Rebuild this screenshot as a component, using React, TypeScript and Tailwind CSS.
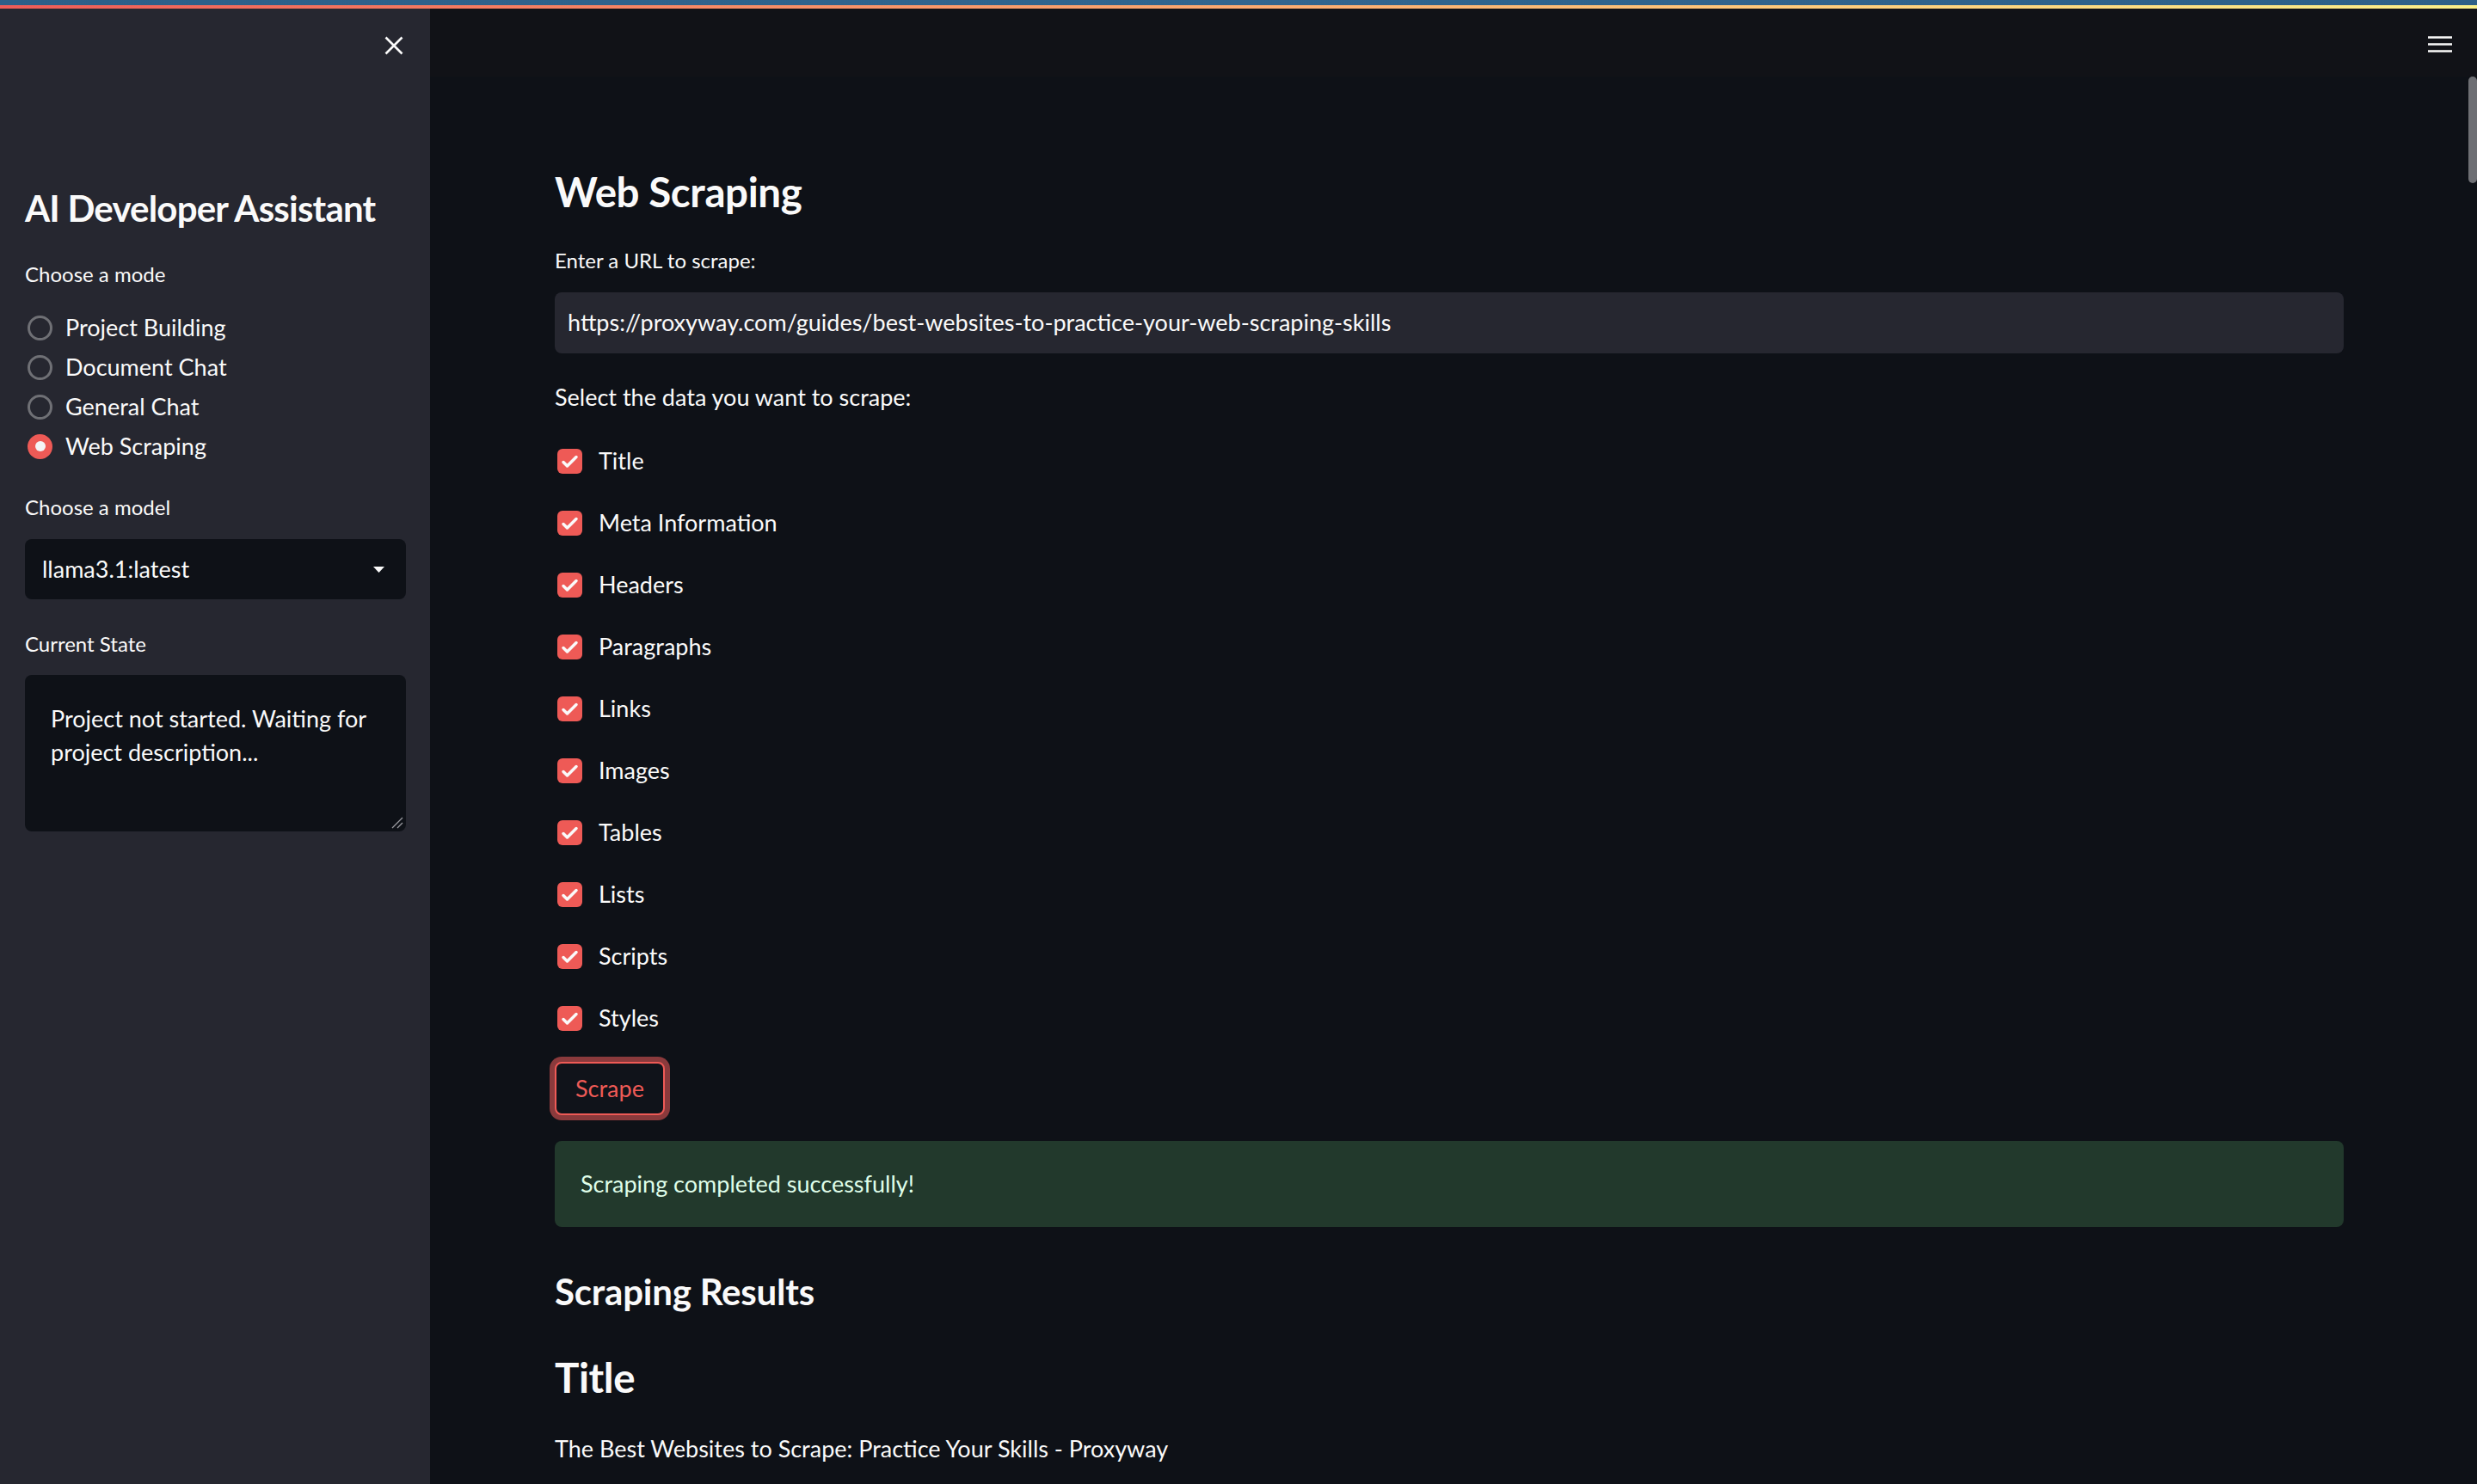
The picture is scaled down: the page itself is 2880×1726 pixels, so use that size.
import React from "react";

const modes = ["Project Building", "Document Chat", "General Chat", "Web Scraping"];

const fields = [
  "Title",
  "Meta Information",
  "Headers",
  "Paragraphs",
  "Links",
  "Images",
  "Tables",
  "Lists",
  "Scripts",
  "Styles",
];

function Radio({ label, checked }: { label: string; checked?: boolean }) {
  return (
    <div className="flex h-[46px] items-center gap-[15px] pl-[3px]">
      {checked ? (
        <span className="flex h-[29px] w-[29px] items-center justify-center rounded-full bg-[#ee5a56]">
          <span className="h-[12px] w-[12px] rounded-full bg-[#f4f4f6]" />
        </span>
      ) : (
        <span className="h-[29px] w-[29px] rounded-full border-[3px] border-[#6f7075]" />
      )}
      <span className="text-[27px] leading-[36px] text-[#fafafa]">{label}</span>
    </div>
  );
}

function Check({ label }: { label: string }) {
  return (
    <div className="flex h-[72px] items-center gap-[19px] pl-[3px]">
      <span className="flex h-[29px] w-[29px] items-center justify-center rounded-[6px] bg-[#ee5a56]">
        <svg width="29" height="29" viewBox="0 0 29 29" fill="none">
          <path
            d="M7 15.5l4.5 4.5L22 9.5"
            stroke="#fafafa"
            strokeWidth="3.5"
            strokeLinecap="round"
            strokeLinejoin="round"
          />
        </svg>
      </span>
      <span className="text-[27px] leading-[36px] text-[#fafafa]">{label}</span>
    </div>
  );
}

function Sidebar() {
  return (
    <aside className="flex w-[500px] shrink-0 flex-col bg-[#262730] pl-[29px] pr-[28px]">
      {/* close button */}
      <div className="flex h-[86px] items-center justify-end">
        <button className="mr-[-8px] flex h-[44px] w-[44px] items-center justify-center">
          <svg width="22" height="22" viewBox="0 0 22 22">
            <path d="M1.5 1.5l19 19M20.5 1.5l-19 19" stroke="#fafafa" strokeWidth="2.6" />
          </svg>
        </button>
      </div>

      <h1 className="mt-[118px] text-[42px] font-bold leading-[56px] tracking-[-0.8px] text-[#fafafa]">
        AI Developer Assistant
      </h1>

      <p className="mt-[33px] text-[24px] leading-[32px] text-[#fafafa]">Choose a mode</p>
      <div className="mt-[23px] flex flex-col">
        {modes.map((m) => (
          <Radio key={m} label={m} checked={m === "Web Scraping"} />
        ))}
      </div>

      <p className="mt-[32px] text-[24px] leading-[32px] text-[#fafafa]">Choose a model</p>
      <div className="mt-[21px] flex h-[70px] items-center justify-between rounded-[8px] bg-[#0e1117] pl-[20px] pr-[25px]">
        <span className="text-[27px] text-[#fafafa]">llama3.1:latest</span>
        <svg width="13" height="7" viewBox="0 0 13 7">
          <path d="M0 0h13L6.5 7z" fill="#fafafa" />
        </svg>
      </div>

      <p className="mt-[36px] text-[24px] leading-[32px] text-[#fafafa]">Current State</p>
      <div className="relative mt-[20px] h-[182px] rounded-[8px] bg-[#0e1117] pl-[30px] pr-[24px] pt-[31px]">
        <p className="text-[27px] leading-[39px] text-[#fafafa]">
          Project not started. Waiting for project description...
        </p>
        <svg className="absolute bottom-[3px] right-[3px]" width="14" height="14" viewBox="0 0 14 14">
          <path d="M13 1L1 13M13 7L7 13" stroke="#9a9ba0" strokeWidth="1.3" />
        </svg>
      </div>
    </aside>
  );
}

function Main() {
  return (
    <main className="relative flex min-w-0 flex-1 flex-col">
      <header className="flex h-[79px] shrink-0 items-start justify-end bg-[#111217] pr-[29px] pt-[32px]">
        <svg width="28" height="20" viewBox="0 0 28 20">
          <path d="M0 1.5h28M0 9.5h28M0 17.5h28" stroke="#fafafa" strokeWidth="2.6" />
        </svg>
      </header>

      {/* scrollbar thumb */}
      <div className="absolute right-0 top-[79px] h-[124px] w-[10px] rounded-full bg-[#6e6f74]" />

      <div className="flex flex-col pl-[145px] pr-[155px]">
        <h2 className="mt-[102px] text-[47.5px] font-bold leading-[64px] tracking-[-0.4px] text-[#fafafa]">
          Web Scraping
        </h2>

        <p className="mt-[32px] text-[24px] leading-[32px] text-[#fafafa]">Enter a URL to scrape:</p>
        <div className="mt-[21px] flex h-[71px] items-center rounded-[8px] bg-[#262730] px-[15px]">
          <span className="text-[27px] text-[#fafafa]">
            https://proxyway.com/guides/best-websites-to-practice-your-web-scraping-skills
          </span>
        </div>

        <p className="mt-[33px] text-[27px] leading-[36px] text-[#fafafa]">
          Select the data you want to scrape:
        </p>

        <div className="mt-[20px] flex flex-col">
          {fields.map((f) => (
            <Check key={f} label={f} />
          ))}
        </div>

        <div className="mt-[15px]">
          <button className="h-[62px] w-[128px] rounded-[8px] border-[2px] border-[#ee5a56] bg-[#10131a] text-[27px] text-[#ee5a56] shadow-[0_0_0_6px_#8a3a3c]">
            Scrape
          </button>
        </div>

        <div className="mt-[30px] flex h-[100px] items-center rounded-[8px] bg-[#22392c] px-[30px]">
          <span className="text-[27px] text-[#dffde9]">Scraping completed successfully!</span>
        </div>

        <h3 className="mt-[47px] text-[42px] font-bold leading-[56px] tracking-[-0.2px] text-[#fafafa]">
          Scraping Results
        </h3>

        <h2 className="mt-[40px] text-[47.5px] font-bold leading-[64px] tracking-[-0.4px] text-[#fafafa]">
          Title
        </h2>

        <p className="mt-[33px] text-[27px] leading-[36px] text-[#fafafa]">
          The Best Websites to Scrape: Practice Your Skills - Proxyway
        </p>
      </div>
    </main>
  );
}

export default function App() {
  return (
    <div className="flex h-[1726px] w-full flex-col overflow-hidden bg-[#0e1117] [font-family:Lato,'Noto_Sans',sans-serif]">
      <div className="h-[6px] shrink-0 bg-gradient-to-r from-[#2d5f88] via-[#31658e] to-[#2e6088]" />
      <div className="h-[4px] shrink-0 bg-gradient-to-r from-[#ee5c58] to-[#faf08a]" />
      <div className="flex min-h-0 flex-1">
        <Sidebar />
        <Main />
      </div>
    </div>
  );
}
